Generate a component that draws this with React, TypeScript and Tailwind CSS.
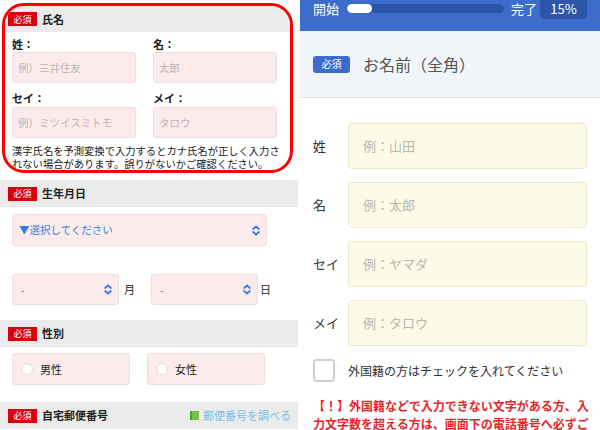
import React from 'react'

const jp = { fontFamily: '"Noto Sans CJK JP", "Noto Sans", sans-serif' }

function Chevrons() {
  return (
    <svg width="8" height="11" viewBox="0 0 8 11" fill="none" stroke="#2f7fe6" strokeWidth="1.8" strokeLinecap="round" strokeLinejoin="round">
      <path d="M1.2 4 L4 1.3 L6.8 4" />
      <path d="M1.2 7 L4 9.7 L6.8 7" />
    </svg>
  )
}

function Badge({ blue = false }: { blue?: boolean }) {
  if (blue) {
    return (
      <span className="flex items-center justify-center w-[37px] h-[17px] rounded-[3px] bg-[#3d6dcc] text-white text-[10px] leading-none">
        必須
      </span>
    )
  }
  return (
    <span className="flex items-center justify-center w-[29px] h-[14px] bg-[#d7000f] text-white text-[9px] leading-none">
      必須
    </span>
  )
}

function SectionHeader({ title, right }: { title: string; right?: React.ReactNode }) {
  return (
    <div className="h-[27px] w-[298px] bg-[#ebebeb] flex items-center pl-[8px] pr-[7px]">
      <Badge />
      <span className="ml-[5px] text-[11px] font-bold text-[#222]">{title}</span>
      {right && <div className="ml-auto">{right}</div>}
    </div>
  )
}

function PinkInput({ placeholder }: { placeholder: string }) {
  return (
    <div className="h-[31px] w-[124px] rounded-[3px] border border-[#eedede] bg-[#fdebeb] flex items-center pl-[5px] text-[10.5px] text-[#bdb3b3]">
      {placeholder}
    </div>
  )
}

function LeftPanel() {
  return (
    <div className="w-[300px] h-[430px] bg-white overflow-hidden" style={jp}>
      <div className="ml-[2px] mt-[3px] w-[291px] h-[170px] border-[3px] border-[#ff0000] rounded-[22px] overflow-hidden">
        <div className="h-[26px] bg-[#ebebeb] flex items-center pl-[3px]">
          <Badge />
          <span className="ml-[5px] text-[11px] font-bold text-[#222]">氏名</span>
        </div>
        <div className="grid grid-cols-[124px_124px] gap-x-[17px] pl-[7px]">
          <div className="mt-[5px] text-[11px] leading-[14px] font-bold text-[#222]">姓：</div>
          <div className="mt-[5px] text-[11px] leading-[14px] font-bold text-[#222]">名：</div>
          <div className="mt-[1px]"><PinkInput placeholder="例）三井住友" /></div>
          <div className="mt-[1px]"><PinkInput placeholder="太郎" /></div>
          <div className="mt-[8px] text-[11px] leading-[14px] font-bold text-[#222]">セイ：</div>
          <div className="mt-[8px] text-[11px] leading-[14px] font-bold text-[#222]">メイ：</div>
          <div className="mt-[2px]"><PinkInput placeholder="例）ミツイスミトモ" /></div>
          <div className="mt-[2px]"><PinkInput placeholder="タロウ" /></div>
        </div>
        <div className="pl-[7px] mt-[7px] text-[10.3px] leading-[12.5px] text-[#222] whitespace-nowrap">
          <div>漢字氏名を予測変換で入力するとカナ氏名が正しく入力さ</div>
          <div>れない場合があります。誤りがないかご確認ください。</div>
        </div>
      </div>

      <div className="mt-[7px]">
        <SectionHeader title="生年月日" />
      </div>
      <div className="ml-[12px] mt-[7px] w-[255px] h-[32px] rounded-[3px] border border-[#eedede] bg-[#fdebeb] flex items-center pl-[6px] pr-[6px] text-[10.5px] text-[#2f7fe6]">
        <span>▼選択してください</span>
        <span className="ml-auto"><Chevrons /></span>
      </div>
      <div className="ml-[12px] mt-[28px] flex items-center">
        <div className="w-[107px] h-[31px] rounded-[3px] border border-[#eedede] bg-[#fdebeb] flex items-center pl-[8px] pr-[6px] text-[10.5px] text-[#2f7fe6]">
          <span>-</span>
          <span className="ml-auto"><Chevrons /></span>
        </div>
        <span className="ml-[5px] text-[11px] text-[#222]">月</span>
        <div className="ml-[16px] w-[107px] h-[31px] rounded-[3px] border border-[#eedede] bg-[#fdebeb] flex items-center pl-[8px] pr-[6px] text-[10.5px] text-[#2f7fe6]">
          <span>-</span>
          <span className="ml-auto"><Chevrons /></span>
        </div>
        <span className="ml-[2px] text-[11px] text-[#222]">日</span>
      </div>

      <div className="mt-[15px]">
        <SectionHeader title="性別" />
      </div>
      <div className="ml-[12px] mt-[6px] flex gap-[17px]">
        {['男性', '女性'].map((t) => (
          <div key={t} className="w-[118px] h-[32px] rounded-[3px] border border-[#eedede] bg-[#fdebeb] flex items-center pl-[8px]">
            <span className="w-[12px] h-[12px] rounded-full bg-white border border-[#e4dcdc]" />
            <span className="ml-[7px] text-[11px] text-[#222]">{t}</span>
          </div>
        ))}
      </div>

      <div className="mt-[17px]">
        <SectionHeader
          title="自宅郵便番号"
          right={
            <span className="flex items-center text-[11px] text-[#7cc0e6]">
              <span className="w-[9px] h-[9px] bg-[#7cc04a] border-l-[2px] border-[#5a9a30] mr-[4px]" />
              郵便番号を調べる
            </span>
          }
        />
      </div>
    </div>
  )
}

function CreamInput({ placeholder }: { placeholder: string }) {
  return (
    <div className="flex-1 h-[46px] rounded-[4px] border border-[#ebe6cc] bg-[#fdfbe7] flex items-center pl-[14px] text-[13px] text-[#b9b6ac]">
      {placeholder}
    </div>
  )
}

function RightPanel() {
  const rows = [
    ['姓', '例：山田'],
    ['名', '例：太郎'],
    ['セイ', '例：ヤマダ'],
    ['メイ', '例：タロウ'],
  ]
  return (
    <div className="w-[300px] h-[430px] bg-white overflow-hidden" style={jp}>
      <div className="h-[31px] bg-[#3d6dcc] flex items-start pl-[13px] pr-[13px] text-white text-[13px]">
        <span className="leading-[17px]">開始</span>
        <div className="ml-[8px] mt-[4px] w-[157px] h-[9px] rounded-full bg-[#2b53a6] overflow-hidden">
          <div className="w-[25px] h-[9px] rounded-full bg-white" />
        </div>
        <span className="ml-[7px] leading-[17px]">完了</span>
        <span className="ml-auto w-[47px] h-[19px] rounded-b-[4px] bg-[#2d56aa] flex items-start justify-center leading-[17px]">15%</span>
      </div>
      <div className="h-[67px] bg-[#f1f4f8] border-b border-[#dfe2e6] flex items-center pl-[13px]">
        <Badge blue />
        <span className="ml-[13px] text-[16px] text-[#555]">お名前（全角）</span>
      </div>
      <div className="pl-[13px] pr-[13px] pt-[25px] flex flex-col gap-[13px]">
        {rows.map(([label, ph]) => (
          <div key={label} className="flex items-center">
            <span className="w-[35px] text-[13px] text-[#333]">{label}</span>
            <CreamInput placeholder={ph} />
          </div>
        ))}
      </div>
      <div className="pl-[13px] mt-[13px] flex items-center">
        <span className="w-[22px] h-[23px] rounded-[4px] border-2 border-[#cfcfcf] bg-white" />
        <span className="ml-[13px] text-[12px] text-[#333]">外国籍の方はチェックを入れてください</span>
      </div>
      <div className="pl-[13px] mt-[15px] text-[12px] leading-[18px] font-bold text-[#e3262b] whitespace-nowrap">
        <div>【！】外国籍などで入力できない文字がある方、入</div>
        <div>力文字数を超える方は、画面下の電話番号へ必ずご</div>
      </div>
    </div>
  )
}

export default function App() {
  return (
    <div className="flex w-[600px] h-[430px] overflow-hidden bg-white">
      <LeftPanel />
      <RightPanel />
    </div>
  )
}
